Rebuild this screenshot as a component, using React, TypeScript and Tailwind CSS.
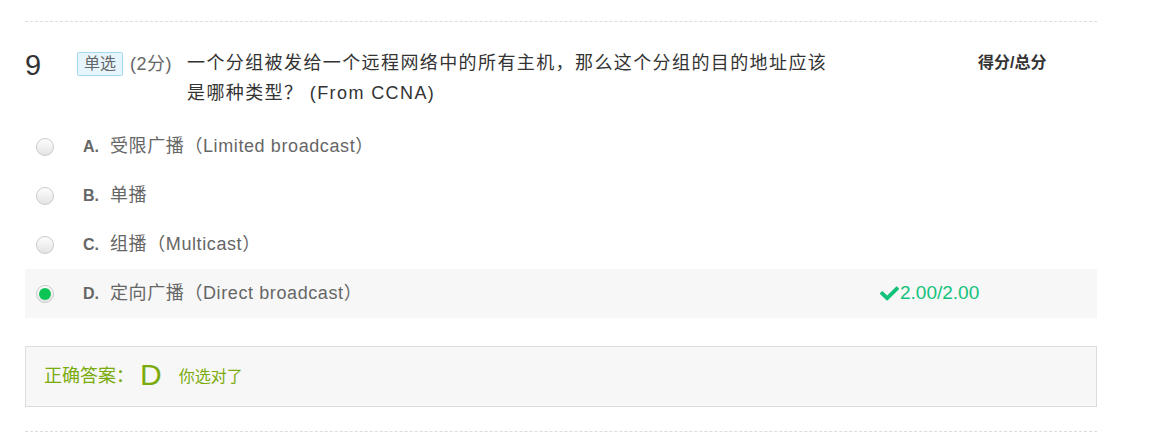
import React from 'react';
import { FaCheck } from 'react-icons/fa';

const font = { fontFamily: '"Liberation Sans", "Noto Sans CJK SC", sans-serif' };

interface OptionProps {
  letter: string;
  text: string;
  checked?: boolean;
  score?: string;
}

function Radio({ checked }: { checked?: boolean }) {
  return (
    <div className="w-[18px] h-[18px] rounded-full border border-[#c9c9c9] bg-gradient-to-b from-[#fdfdfd] to-[#e4e4e4] flex items-center justify-center shadow-[inset_0_1px_1px_rgba(255,255,255,0.8)]">
      {checked && <div className="w-[12px] h-[12px] rounded-full bg-[#0cc555]" />}
    </div>
  );
}

function Option({ letter, text, checked, score }: OptionProps) {
  return (
    <div className={`flex items-center h-[49px] ${checked ? 'bg-[#f7f7f7]' : ''}`}>
      <div className="w-[855px] flex items-center">
        <div className="ml-[11px] w-[47px]">
          <Radio checked={checked} />
        </div>
        <span className="text-[16px] font-bold text-[#666] w-[27px]">{letter}.</span>
        <span className="text-[18px] text-[#666] tracking-[0.6px]">{text}</span>
      </div>
      {score && (
        <div className="flex items-center text-[19px] text-[#13c27a]">
          <FaCheck className="w-[19px] h-[19px] mr-[1px]" />
          {score}
        </div>
      )}
    </div>
  );
}

export default function App() {
  return (
    <div className="bg-white w-[1163px] h-[435px] overflow-hidden" style={font}>
      <div className="ml-[25px] w-[1072px]">
        <div className="mt-[21px] border-t border-dashed border-[#dcdcdc]" />

        <div className="flex pt-[26px]">
          <div className="w-[52px] text-[29px] leading-[30px] text-[#333] pt-[2px]">9</div>
          <div className="h-[24px] px-[6px] mt-[4px] border border-[#a8d9f3] bg-[#e6f5fd] rounded-[2px] text-[16px] leading-[22px] text-[#666]">
            单选
          </div>
          <div className="ml-[7px] mt-[2px] text-[18px] leading-[28px] text-[#666] w-[57px] tracking-[0.5px]">(2分)</div>
          <div className="w-[700px] text-[18px] leading-[30px] text-[#333] tracking-[1.4px]">
            一个分组被发给一个远程网络中的所有主机，那么这个分组的目的地址应该
            <br />
            是哪种类型？ (From CCNA)
          </div>
          <div className="ml-[91px] mt-[3px] text-[16px] leading-[24px] font-bold text-[#333]">得分/总分</div>
        </div>

        <div className="mt-[14px]">
          <Option letter="A" text="受限广播（Limited broadcast）" />
          <Option letter="B" text="单播" />
          <Option letter="C" text="组播（Multicast）" />
          <Option letter="D" text="定向广播（Direct broadcast）" checked score="2.00/2.00" />
        </div>

        <div className="mt-[28px] h-[61px] border border-[#dcdcdc] bg-[#f7f7f7] flex items-center pl-[18px] text-[#7aab0b]">
          <span className="text-[18px]">正确答案：</span>
          <span className="text-[30px] leading-[30px] ml-[6px] mb-[4px]">D</span>
          <span className="text-[16px] ml-[17px]">你选对了</span>
        </div>

        <div className="mt-[24px] border-t border-dashed border-[#dcdcdc]" />
      </div>
    </div>
  );
}
